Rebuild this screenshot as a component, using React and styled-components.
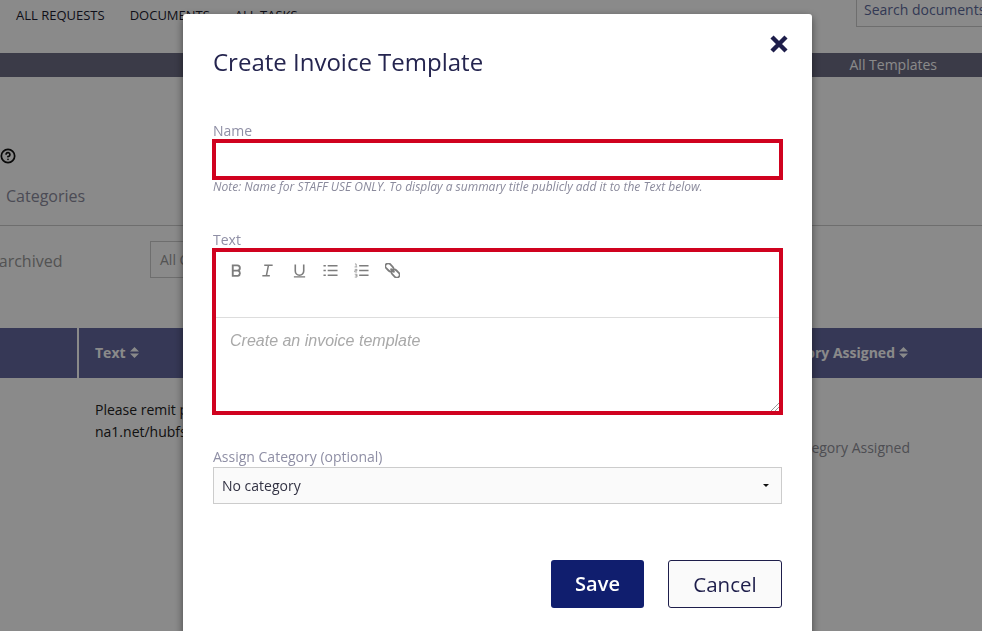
import React from "react";
import styled, { createGlobalStyle } from "styled-components";
import { CircleHelp } from "lucide-react";

const GlobalStyle = createGlobalStyle`
  html, body {
    margin: 0;
    padding: 0;
    height: 100%;
    overflow: hidden;
    background: #ffffff;
    font-family: "Open Sans", "Liberation Sans", sans-serif;
  }
`;

const SortIcon = () => (
  <SortSvg viewBox="0 0 10 12">
    <path d="M5 0 L10 5 H0 Z M5 12 L0 7 H10 Z" fill="currentColor" />
  </SortSvg>
);

const BoldIcon = () => (
  <ToolSvg viewBox="0 0 16 16">
    <path d="M4 2.5h4.8a2.8 2.8 0 0 1 0 5.6H4zM4 8.1h5.5a2.9 2.9 0 0 1 0 5.6H4z" fill="none" stroke="#7d7d7d" strokeWidth="2" />
  </ToolSvg>
);

const ItalicIcon = () => (
  <ToolSvg viewBox="0 0 16 16">
    <path d="M4.5 2.5h9M2.5 13.5h8M9 2.5 6.8 13.5" fill="none" stroke="#7d7d7d" strokeWidth="1.6" />
  </ToolSvg>
);

const UnderlineIcon = () => (
  <ToolSvg viewBox="0 0 16 16">
    <path d="M3.5 1.5v7a4.5 4.5 0 0 0 9 0v-7" fill="none" stroke="#7d7d7d" strokeWidth="1.7" />
    <path d="M2 14.8h12" stroke="#7d7d7d" strokeWidth="1.4" />
  </ToolSvg>
);

const BulletIcon = () => (
  <ToolSvg viewBox="0 0 16 16">
    <path d="M5 3h10.500M5 8h10.500M5 13h10.500" stroke="#7d7d7d" strokeWidth="1.700" />
    <path d="M.5 3h2.500M.5 8h2.500M.5 13h2.500" stroke="#7d7d7d" strokeWidth="1.700" />
  </ToolSvg>
);

const NumberIcon = () => (
  <ToolSvg viewBox="0 0 16 16">
    <path d="M5.500 3h10M5.500 8h10M5.500 13h10" stroke="#7d7d7d" strokeWidth="1.700" />
    <path d="M1 1h1.300v3M.6 4.200h2.800M.8 6.800h2.400v1.400H.8v1.400h2.500M.8 12h2.400v3H.8M1.500 13.500h1.700" fill="none" stroke="#8a8a8a" strokeWidth=".8" />
  </ToolSvg>
);

const LinkIcon = () => (
  <ToolSvg viewBox="0 0 16 16">
    <g fill="none" stroke="#7d7d7d" strokeWidth="1.900" transform="rotate(45 8 8)">
      <rect x="-1.500" y="5" width="9.500" height="6" rx="3" />
      <rect x="8" y="5" width="9.500" height="6" rx="3" />
      <path d="M5 8h6" />
    </g>
  </ToolSvg>
);

const App = () => {
  return (
    <>
      <GlobalStyle />
      <Page>
        <TopNav>
          <NavLink>ALL REQUESTS</NavLink>
          <NavLink>DOCUMENTS</NavLink>
          <NavLink>ALL TASKS</NavLink>
          <SearchBox>Search documents</SearchBox>
        </TopNav>
        <SubBar>All Templates</SubBar>
        <HelpRow>
          <CircleHelp size={16} strokeWidth={2.6} color="#111" />
        </HelpRow>
        <TabRow>Categories</TabRow>
        <FilterRow>
          <ArchivedLabel>Show archived</ArchivedLabel>
          <FilterSelect>All Categories</FilterSelect>
        </FilterRow>
        <TableHead>
          <HeadCell $width="77px" />
          <HeadCell $grow>
            Text <SortIcon />
          </HeadCell>
          <HeadCell $right>
            Category Assigned <SortIcon />
          </HeadCell>
        </TableHead>
        <TableRow>
          <BodyText>
            Please remit payment to the address shown at
            <br />
            na1.net/hubfs/invoice-template
          </BodyText>
          <CategoryText>No Category Assigned</CategoryText>
        </TableRow>
      </Page>

      <Overlay />

      <Modal>
        <CloseButton aria-label="Close">
          <svg viewBox="0 0 20 20" width="20" height="20">
            <path d="M3 3 17 17M17 3 3 17" stroke="#1e1e4b" strokeWidth="4.400" />
          </svg>
        </CloseButton>
        <Title>Create Invoice Template</Title>

        <NameLabel>Name</NameLabel>
        <NameInput />
        <Note>Note: Name for STAFF USE ONLY. To display a summary title publicly add it to the Text below.</Note>

        <TextLabel>Text</TextLabel>
        <Editor>
          <Toolbar>
            <ToolButton><BoldIcon /></ToolButton>
            <ToolButton><ItalicIcon /></ToolButton>
            <ToolButton><UnderlineIcon /></ToolButton>
            <ToolButton><BulletIcon /></ToolButton>
            <ToolButton><NumberIcon /></ToolButton>
            <ToolButton><LinkIcon /></ToolButton>
          </Toolbar>
          <EditorBody>
            Create an invoice template
            <ResizeGrip viewBox="0 0 8 8">
              <path d="M0 8 8 0M4 8 8 4" stroke="#999" strokeWidth="1" />
            </ResizeGrip>
          </EditorBody>
        </Editor>

        <CategoryLabel>Assign Category (optional)</CategoryLabel>
        <CategorySelect>
          No category
          <Caret />
        </CategorySelect>

        <Actions>
          <SaveButton>Save</SaveButton>
          <CancelButton>Cancel</CancelButton>
        </Actions>
      </Modal>
    </>
  );
};

export default App;

const Page = styled.div`
  width: 982px;
  height: 631px;
  overflow: hidden;
  background: #ffffff;
`;

const TopNav = styled.div`
  display: flex;
  align-items: flex-start;
  height: 53px;
  padding-left: 16px;
  box-sizing: border-box;
`;

const NavLink = styled.div`
  margin-right: 25px;
  padding-top: 6px;
  font-size: 13px;
  line-height: 18px;
  color: #1c1c30;
`;

const SearchBox = styled.div`
  margin-left: auto;
  margin-top: -11px;
  margin-right: -60px;
  width: 186px;
  height: 38px;
  box-sizing: border-box;
  padding: 10px 7px 0;
  border: 1px solid #cccccc;
  font-size: 14px;
  line-height: 20px;
  color: #5d6a9c;
  white-space: nowrap;
`;

const SubBar = styled.div`
  display: flex;
  justify-content: flex-end;
  align-items: center;
  height: 24px;
  padding: 0 45px 2px 0;
  box-sizing: border-box;
  background: #6d6d85;
  font-size: 14px;
  color: #ffffff;
`;

const HelpRow = styled.div`
  display: flex;
  align-items: center;
  height: 20px;
  margin-top: 69px;
`;

const TabRow = styled.div`
  height: 60px;
  padding: 19px 0 0 6px;
  box-sizing: border-box;
  border-bottom: 1px solid #cccccc;
  font-size: 16px;
  line-height: 22px;
  color: #8b8b9d;
`;

const FilterRow = styled.div`
  display: flex;
  align-items: center;
  height: 37px;
  margin-top: 15px;
`;

const ArchivedLabel = styled.div`
  width: 196px;
  margin: 2px 0 0 -46px;
  font-size: 16px;
  color: #999999;
  white-space: nowrap;
`;

const FilterSelect = styled.div`
  width: 200px;
  height: 37px;
  box-sizing: border-box;
  padding: 8px 9px;
  border: 1px solid #cccccc;
  font-size: 14px;
  color: #999999;
`;

const TableHead = styled.div`
  display: flex;
  height: 50px;
  margin-top: 50px;
  background: #64689f;
`;

const HeadCell = styled.div`
  display: flex;
  align-items: center;
  gap: 4px;
  box-sizing: border-box;
  width: ${(p) => p.$width || "auto"};
  flex: ${(p) => (p.$grow ? 1 : "none")};
  padding-left: ${(p) => (p.$width ? "0" : "16px")};
  padding-right: ${(p) => (p.$right ? "74px" : "0")};
  padding-bottom: 2px;
  border-left: ${(p) => (p.$grow ? "2px solid #ffffff" : "none")};
  font-size: 14px;
  font-weight: 700;
  color: #ffffff;
`;

const SortSvg = styled.svg`
  width: 9px;
  height: 11px;
`;

const TableRow = styled.div`
  display: flex;
  justify-content: space-between;
  padding: 21px 72px 0 95px;
`;

const BodyText = styled.div`
  font-size: 14px;
  line-height: 22px;
  color: #222222;
  white-space: nowrap;
`;

const CategoryText = styled.div`
  margin-top: 38px;
  font-size: 14px;
  line-height: 22px;
  color: #909099;
`;

const Overlay = styled.div`
  position: fixed;
  inset: 0;
  background: rgba(0, 0, 0, 0.46);
`;

const Modal = styled.div`
  position: fixed;
  top: 14px;
  left: 183px;
  width: 629px;
  height: 640px;
  box-sizing: border-box;
  padding: 0 30px;
  background: #ffffff;
  border-radius: 3px;
  box-shadow: 0 3px 9px rgba(0, 0, 0, 0.5);
`;

const CloseButton = styled.button`
  position: absolute;
  top: 20px;
  right: 23px;
  display: flex;
  padding: 0;
  border: 0;
  background: none;
`;

const Title = styled.h2`
  margin: 0;
  padding-top: 31px;
  font-size: 24px;
  line-height: 34px;
  font-weight: 400;
  color: #25254f;
`;

const FieldLabel = styled.div`
  font-size: 14px;
  line-height: 18px;
  color: #8f8fa5;
`;

const NameLabel = styled(FieldLabel)`
  height: 17px;
  margin-top: 43px;
`;

const TextLabel = styled(FieldLabel)`
  margin-top: 37px;
`;

const CategoryLabel = styled(FieldLabel)`
  margin-top: 34px;
`;

const NameInput = styled.div`
  height: 41px;
  margin: 0 -1px;
  box-sizing: border-box;
  border: 4px solid #d0021f;
  background: #ffffff;
`;

const Note = styled.div`
  font-size: 12px;
  line-height: 14px;
  font-style: italic;
  color: #8a8a9c;
  white-space: nowrap;
`;

const Editor = styled.div`
  height: 167px;
  margin: -1px -1px;
  box-sizing: border-box;
  border: 4px solid #d0021f;
  background: #ffffff;
`;

const Toolbar = styled.div`
  display: flex;
  align-items: flex-start;
  height: 66px;
  box-sizing: border-box;
  padding: 11px 0 0 13px;
  border-bottom: 1px solid #dddddd;
`;

const ToolButton = styled.div`
  display: flex;
  width: 31.300px;
`;

const ToolSvg = styled.svg`
  width: 15px;
  height: 15px;
`;

const EditorBody = styled.div`
  position: relative;
  height: 93px;
  padding: 13px 14px 0;
  box-sizing: border-box;
  font-family: "Liberation Sans", Arial, sans-serif;
  font-size: 16px;
  line-height: 20px;
  font-style: italic;
  color: #a9a9a9;
`;

const ResizeGrip = styled.svg`
  position: absolute;
  right: 0;
  bottom: 0;
  width: 8px;
  height: 8px;
`;

const CategorySelect = styled.div`
  display: flex;
  align-items: center;
  justify-content: space-between;
  height: 37px;
  margin-top: 1px;
  box-sizing: border-box;
  padding: 0 12px 0 8px;
  border: 1px solid #cccccc;
  background: #fafafa;
  font-size: 14px;
  color: #333344;
`;

const Caret = styled.span`
  width: 0;
  height: 0;
  border-top: 3px solid #111111;
  border-left: 3px solid transparent;
  border-right: 3px solid transparent;
`;

const Actions = styled.div`
  display: flex;
  justify-content: flex-end;
  gap: 24px;
  margin-top: 56px;
`;

const SaveButton = styled.button`
  width: 93px;
  height: 48px;
  padding: 0 0 2px;
  border: 0;
  border-radius: 3px;
  background: #101e6e;
  color: #ffffff;
  font-family: inherit;
  font-size: 20px;
  font-weight: 600;
`;

const CancelButton = styled.button`
  width: 114px;
  height: 48px;
  padding: 0;
  border: 1px solid #1e1e4b;
  border-radius: 3px;
  background: #fafafa;
  color: #1e1e4b;
  font-family: inherit;
  font-size: 20.500px;
  font-weight: 500;
`;
